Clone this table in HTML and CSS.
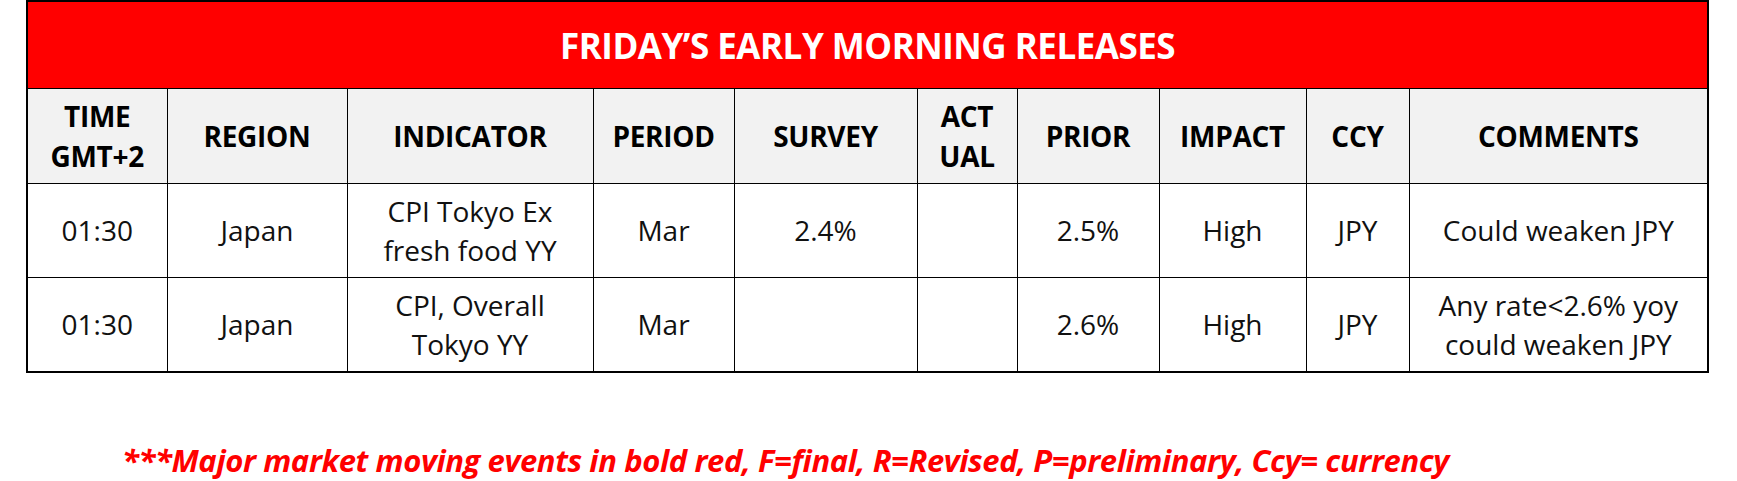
FILE: index.html
```html
<!DOCTYPE html>
<html>
<head>
<meta charset="utf-8">
<link rel="stylesheet" href="styles.css">
</head>
<body>
<div class="page">
  <table class="releases">
    <colgroup>
      <col class="c-time"><col class="c-region"><col class="c-ind"><col class="c-period"><col class="c-survey"><col class="c-actual"><col class="c-prior"><col class="c-impact"><col class="c-ccy"><col class="c-comments">
    </colgroup>
    <thead>
      <tr class="title-row"><th colspan="10">FRIDAY’S EARLY MORNING RELEASES</th></tr>
      <tr class="head-row">
        <th>TIME<br>GMT+2</th>
        <th>REGION</th>
        <th>INDICATOR</th>
        <th>PERIOD</th>
        <th>SURVEY</th>
        <th>ACT<br>UAL</th>
        <th>PRIOR</th>
        <th>IMPACT</th>
        <th>CCY</th>
        <th>COMMENTS</th>
      </tr>
    </thead>
    <tbody>
      <tr>
        <td>01:30</td>
        <td>Japan</td>
        <td>CPI Tokyo Ex<br>fresh food YY</td>
        <td>Mar</td>
        <td>2.4%</td>
        <td></td>
        <td>2.5%</td>
        <td>High</td>
        <td>JPY</td>
        <td>Could weaken JPY</td>
      </tr>
      <tr>
        <td>01:30</td>
        <td>Japan</td>
        <td>CPI, Overall<br>Tokyo YY</td>
        <td>Mar</td>
        <td></td>
        <td></td>
        <td>2.6%</td>
        <td>High</td>
        <td>JPY</td>
        <td>Any rate&lt;2.6% yoy<br>could weaken JPY</td>
      </tr>
    </tbody>
  </table>
  <p class="note">***Major market moving events in bold red, F=final, R=Revised, P=preliminary, Ccy= currency</p>
</div>
</body>
</html>
```

FILE: styles.css
```css
html, body {
  margin: 0;
  padding: 0;
  background: #ffffff;
}

.page {
  padding-left: 26px;
  font-family: "Open Sans", "Liberation Sans", sans-serif;
}

.releases {
  border-collapse: collapse;
  table-layout: fixed;
  width: 1681px;
  border: 2px solid #000;
}

.c-time { width: 140px; }
.c-region { width: 180px; }
.c-ind { width: 246px; }
.c-period { width: 141px; }
.c-survey { width: 183px; }
.c-actual { width: 100px; }
.c-prior { width: 142px; }
.c-impact { width: 147px; }
.c-ccy { width: 103px; }
.c-comments { width: 299px; }

.releases th,
.releases td {
  border: 1px solid #000;
  text-align: center;
  vertical-align: middle;
  padding: 0 4px;
  color: #000;
}

.title-row th {
  height: 86px;
  background: #ff0000;
  color: #ffffff;
  font-size: 35px;
  font-weight: 700;
  letter-spacing: -0.5px;
  padding-top: 0;
}

.head-row th {
  height: 94px;
  background: #f2f2f2;
  font-size: 28px;
  font-weight: 700;
  line-height: 40px;
  letter-spacing: -0.3px;
}

.releases td {
  height: 93px;
  font-size: 28px;
  font-weight: 400;
  line-height: 39px;
  color: #111;
}

.note {
  margin: 67px 0 0 96px;
  color: #ff0000;
  font-size: 31px;
  font-weight: 700;
  font-style: italic;
  letter-spacing: -0.4px;
  line-height: 40px;
}
```
